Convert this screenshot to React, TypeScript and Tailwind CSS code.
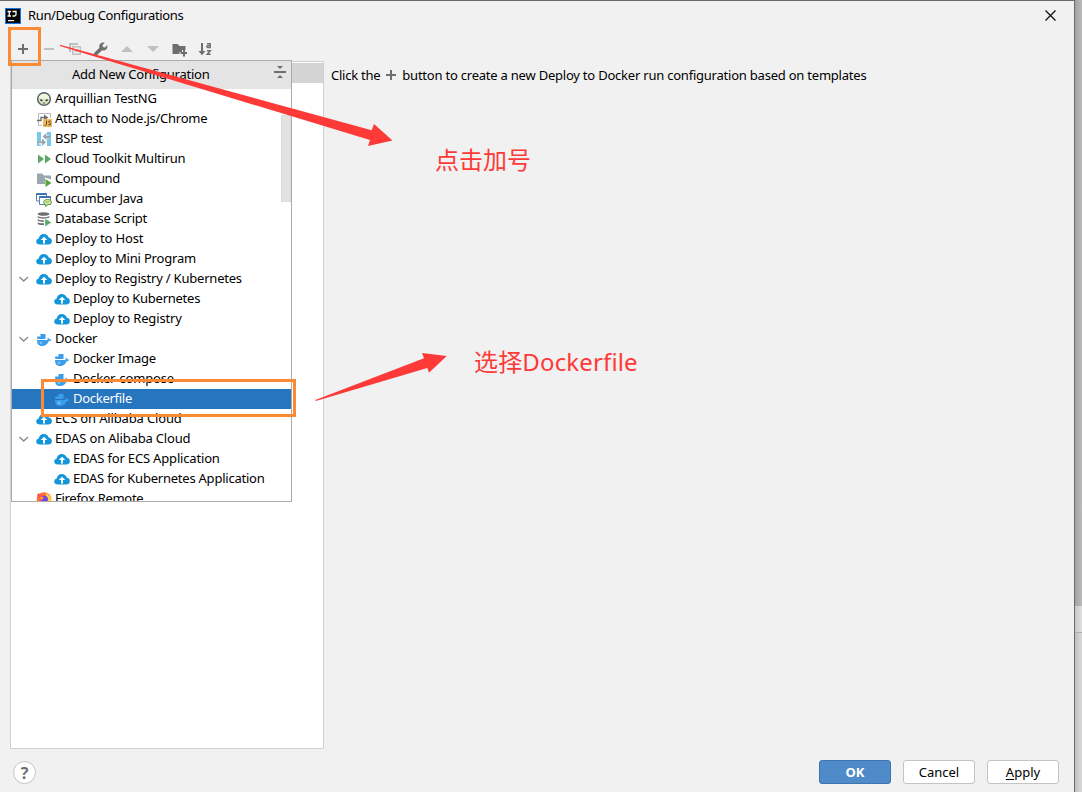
import type { ReactNode } from "react";

type IconProps = { className?: string };

function Svg({ children, className = "" }: { children: ReactNode; className?: string }) {
  return (
    <svg width="16" height="16" viewBox="0 0 16 16" className={`block shrink-0 ${className}`}>
      {children}
    </svg>
  );
}

const PlusIcon = ({ className }: IconProps) => (
  <Svg className={className}>
    <path d="M7 3h2v4h4v2H9v4H7V9H3V7h4z" fill="#6e6e6e" />
  </Svg>
);

const MinusIcon = () => (
  <Svg>
    <path d="M3 7h10v2H3z" fill="#c0c0c0" />
  </Svg>
);

const CopyIcon = () => (
  <Svg>
    <path d="M2 2h9v2H4v7H2z" fill="#c0c0c0" />
    <path d="M5 5h9v9H5zM6.5 6.5v6h6v-6z" fillRule="evenodd" fill="#c0c0c0" />
    <path d="M7.5 8h4v1h-4zM7.5 10h4v1h-4z" fill="#c0c0c0" />
  </Svg>
);

const WrenchIcon = () => (
  <Svg>
    <path
      d="M14.2 4.3 12 6.5 9.9 6.1 9.500 4l2.200-2.200C10.200 1.200 8.400 1.500 7.300 2.700 6.200 3.800 6 5.400 6.500 6.700L1.600 11.600c-.7.7-.7 1.800 0 2.500s1.800.7 2.500 0L9 9.300c1.400.5 3 .2 4.100-.8 1.200-1.200 1.600-2.800 1.100-4.200z"
      fill="#6e6e6e"
    />
  </Svg>
);

const UpIcon = () => (
  <Svg>
    <path d="M2 11l6-6 6 6z" fill="#c0c0c0" />
  </Svg>
);

const DownIcon = () => (
  <Svg>
    <path d="M2 5l6 6 6-6z" fill="#c0c0c0" />
  </Svg>
);

const NewFolderIcon = () => (
  <Svg>
    <path d="M1.500 3h5l2 2h6v4h-3.500v2H8.500v2h-7z" fill="#6e6e6e" />
    <path d="M12 8.500h2V11h2v2h-2v2.500h-2V13H9.500v-2H12z" fill="#6e6e6e" />
  </Svg>
);

const SortIcon = () => (
  <Svg>
    <path d="M4 2h2v8h2.500L5 14.200 1.500 10H4z" fill="#6e6e6e" />
    <path
      d="M10 2.800h3.200v3.700h-2.400c-1.300 0-1.300-1.900 0-1.900h2.400M10 9.700h3.300L10.200 13.300h3.500"
      fill="none"
      stroke="#6e6e6e"
      strokeWidth="1.400"
    />
  </Svg>
);

const AppIcon = () => (
  <Svg>
    <rect width="16" height="16" fill="#1479e8" />
    <rect x="1" y="1" width="14" height="14" fill="#050505" />
    <path
      d="M2.500 3.500h3.500M4.250 3.500v4.500M2.500 8h3.500M7.500 3.500H11v3c0 1-.6 1.500-1.600 1.500H7.500"
      fill="none"
      stroke="#fff"
      strokeWidth="1.300"
    />
    <path d="M3 12h6v1.200H3z" fill="#fff" />
  </Svg>
);

const AlienIcon = () => (
  <Svg>
    <circle cx="8" cy="8" r="6.300" fill="#dfe6bd" stroke="#54656a" strokeWidth="1.500" />
    <path d="M3 6c1.500-4 8.500-4 10 0v1.500H3z" fill="#f3f5e2" />
    <ellipse cx="5.300" cy="9.300" rx="1.400" ry=".8" transform="rotate(25 5.300 9.300)" fill="#2f3b3f" />
    <ellipse cx="10.700" cy="9.300" rx="1.400" ry=".8" transform="rotate(-25 10.700 9.300)" fill="#2f3b3f" />
    <path d="M6.800 12h2.400" stroke="#54656a" />
  </Svg>
);

const AttachIcon = () => (
  <Svg>
    <path d="M14.500 7V2.500h-12v12H6" fill="none" stroke="#b4bcc2" />
    <path d="M1 9.500h4V6.500h4" fill="none" stroke="#6e6e6e" strokeWidth="1.400" />
    <path d="M8 3.500l4.500 3L8 9.500z" fill="#6e6e6e" />
    <rect x="7" y="8" width="9" height="8" fill="#f4b95c" />
    <path
      d="M10.500 9.500v4c0 1-1.200 1.200-2 .6M14.800 10.300c-1.300-.7-2.500-.2-2.300.7.200.8 2.200.6 2.300 1.800 0 1.300-1.800 1.400-2.800.7"
      fill="none"
      stroke="#5c4a2a"
    />
  </Svg>
);

const BspIcon = () => (
  <Svg>
    <path d="M1 1h4v9.500H3v3h2V15H1zM11 1h4v14h-4v-7.500h2v-3h-2z" fill="#78c8ea" />
    <path d="M10.500 2v3H14v2h-3.500v2L6.500 5.500zM6 7.500v2.700H2v2h4V15l4-3.800z" fill="#9aa7b0" />
  </Svg>
);

const MultirunIcon = () => (
  <Svg>
    <path d="M2 3.500 8 8l-6 4.500zM9 3.500 15 8l-6 4.500z" fill="#59a869" />
  </Svg>
);

const CompoundIcon = () => (
  <Svg>
    <path d="M1 2.500h5l2 2h7v4L9 6.500V13H1z" fill="#9aa7b0" />
    <path d="M9.500 8 15.500 12l-6 4z" fill="#4fa63a" />
  </Svg>
);

const CucumberIcon = () => (
  <Svg>
    <path d="M.5 2.500h10v7.500H.5z" fill="#fff" stroke="#5081b5" />
    <path d="M.5 2.500h10V4H.5z" fill="#3c6da5" />
    <path d="M3.500 5.500h11v8h-11z" fill="#fff" stroke="#5081b5" />
    <path d="M3.500 5.500h11V7h-11z" fill="#3c6da5" />
    <path
      d="M11.500 8.500c2.300 0 4 1 4 2.600s-1.700 2.600-3.500 2.600l-2.300 2v-2.100c-1.200-.4-2-1.300-2-2.500 0-1.600 1.500-2.600 3.800-2.600z"
      fill="#d3eaa7"
      stroke="#659b35"
    />
    <path d="M9.500 10.500h4M9.500 12h3" stroke="#9dbf66" strokeWidth=".8" />
  </Svg>
);

const DatabaseIcon = () => (
  <Svg>
    <ellipse cx="7.500" cy="3" rx="5.800" ry="1.800" fill="#6e6e6e" />
    <path
      d="M1.700 5c1.500 1.700 10 1.700 11.600 0v1.500c-2 1.500-10 1.500-11.600 0zM1.700 8c1 1.200 4 1.500 6.300 1.300v1.500c-2.300.2-5.300-.2-6.300-1.300zM1.700 11c1 1.300 4 1.500 6.300 1.300V14c-3.500.2-6-.4-6.300-1.500z"
      fill="#6e6e6e"
    />
    <path d="M9 7.500 15.500 11.500 9 15.500z" fill="#59a869" stroke="#fff" strokeWidth=".3" />
  </Svg>
);

const CloudIcon = () => (
  <Svg>
    <path
      d="M4 13.500C1.700 13.500.2 12.200.2 10.500.2 9 1.200 7.800 2.700 7.500 3 4.800 5.200 3 7.800 3c2.300 0 4.200 1.300 4.900 3.400 1.900.2 3.200 1.700 3.200 3.500 0 2.200-1.600 3.600-3.700 3.600z"
      fill="#1296db"
    />
    <path d="M8 5.800 11.300 9H9v3.500H7V9H4.700z" fill="#fff" />
  </Svg>
);

const DockerIcon = () => (
  <Svg>
    <path d="M4.500 3H9.500v5h-5zM1.200 5.500h3.300V8H1.200z" fill="#3a9eed" />
    <path
      d="M1 9h10.300c.6-1 .4-1.800.2-2.500 1 .3 1.600 1.100 1.700 1.900.9-.2 1.700 0 2.300.4-.6 1.100-1.700 1.500-2.900 1.400C11.600 13.200 9.300 15 5.900 15 2.500 15 1 12.800 1 9z"
      fill="#3a9eed"
    />
    <circle cx="5" cy="11.800" r="1" fill="none" stroke="#a8d5f8" strokeWidth=".7" />
  </Svg>
);

const FirefoxIcon = () => (
  <Svg>
    <circle cx="8" cy="8.500" r="7.300" fill="#ff7139" />
    <path d="M10 1c.5 2.500 5.300 3.500 5.300 8 0 3-2 5.500-5 6.500z" fill="#ffd43b" />
    <path d="M1 4.500 2.500 2l2 2 3 .5L5 9z" fill="#ff4f4f" />
    <circle cx="8.300" cy="8.300" r="3.600" fill="#7542e5" />
    <path d="M3.500 6.500c2-1.500 3.500 0 4.500 0-.5 1.500-2 1.500-2.500 3z" fill="#ff9640" />
  </Svg>
);

const CollapseIcon = () => (
  <Svg>
    <path d="M2 7h12v2H2zM5 2h6L8 5zM5 14h6l-3-3z" fill="#6e6e6e" />
  </Svg>
);

const Chevron = () => (
  <svg width="10" height="8" viewBox="0 0 10 8" className="-mt-px block">
    <path d="M.5 2l4.200 4L9 2" fill="none" stroke="#8a8a8a" strokeWidth="1.300" />
  </svg>
);

type Row = {
  label: string;
  icon: () => ReactNode;
  tracking: string;
  child?: boolean;
  open?: boolean;
  selected?: boolean;
};

const rows: Row[] = [
  { label: "Arquillian TestNG", icon: AlienIcon, tracking: "tracking-[-0.22px]" },
  { label: "Attach to Node.js/Chrome", icon: AttachIcon, tracking: "tracking-[-0.25px]" },
  { label: "BSP test", icon: BspIcon, tracking: "tracking-[-0.28px]" },
  { label: "Cloud Toolkit Multirun", icon: MultirunIcon, tracking: "tracking-[-0.22px]" },
  { label: "Compound", icon: CompoundIcon, tracking: "tracking-[-0.42px]" },
  { label: "Cucumber Java", icon: CucumberIcon, tracking: "tracking-[-0.26px]" },
  { label: "Database Script", icon: DatabaseIcon, tracking: "tracking-[-0.25px]" },
  { label: "Deploy to Host", icon: CloudIcon, tracking: "tracking-[-0.13px]" },
  { label: "Deploy to Mini Program", icon: CloudIcon, tracking: "tracking-[-0.18px]" },
  { label: "Deploy to Registry / Kubernetes", icon: CloudIcon, tracking: "tracking-[-0.21px]", open: true },
  { label: "Deploy to Kubernetes", icon: CloudIcon, tracking: "tracking-[-0.25px]", child: true },
  { label: "Deploy to Registry", icon: CloudIcon, tracking: "tracking-[-0.15px]", child: true },
  { label: "Docker", icon: DockerIcon, tracking: "tracking-[-0.16px]", open: true },
  { label: "Docker Image", icon: DockerIcon, tracking: "tracking-[-0.25px]", child: true },
  { label: "Docker-compose", icon: DockerIcon, tracking: "tracking-[-0.15px]", child: true },
  { label: "Dockerfile", icon: DockerIcon, tracking: "tracking-[-0.28px]", child: true, selected: true },
  { label: "ECS on Alibaba Cloud", icon: CloudIcon, tracking: "tracking-[-0.15px]" },
  { label: "EDAS on Alibaba Cloud", icon: CloudIcon, tracking: "tracking-[-0.17px]", open: true },
  { label: "EDAS for ECS Application", icon: CloudIcon, tracking: "tracking-[-0.17px]", child: true },
  { label: "EDAS for Kubernetes Application", icon: CloudIcon, tracking: "tracking-[-0.23px]", child: true },
  { label: "Firefox Remote", icon: FirefoxIcon, tracking: "tracking-[-0.28px]" },
];

function ConfigRow({ label, icon: Icon, child, open, selected, tracking }: Row) {
  return (
    <div className={`flex h-5 shrink-0 items-center ${selected ? "bg-[#2675bf] text-white" : ""}`}>
      <div className={`flex shrink-0 pl-[7px] ${child ? "w-[42px]" : "w-6"}`}>{open && <Chevron />}</div>
      <Icon />
      <span className={`-mt-[2px] ml-[3px] whitespace-nowrap ${tracking}`}>{label}</span>
    </div>
  );
}

function AddPopup() {
  return (
    <div className="absolute -top-[2px] left-0 flex h-[442px] w-[281px] flex-col overflow-hidden border border-[#ababab] bg-white">
      <div className="flex h-7 shrink-0 items-center bg-[#e4e4e4] pr-[3px]">
        <span className="-mt-[2px] flex-1 pl-[60px] tracking-[-0.24px] whitespace-nowrap">Add New Configuration</span>
        <div className="-mt-[7px]">
          <CollapseIcon />
        </div>
      </div>
      <div className="flex flex-col">
        {rows.map((r) => (
          <ConfigRow key={r.label} {...r} />
        ))}
      </div>
      <div className="absolute top-[54px] right-0 h-[87px] w-[10px] border border-[#dadada] bg-[#e2e2e2]" />
    </div>
  );
}

function Annotations() {
  return (
    <>
      <svg width="1082" height="792" className="pointer-events-none absolute top-0 left-0">
        <path d="M60 44.800 371.700 130.300 374 124 392.500 140.500 368 146 370 140 60 46z" fill="#fd3a38" />
        <path d="M315.300 400 424 358.300 422 353 446.700 356 429 372.700 427.300 368 315.800 401z" fill="#fd3a38" />
        <rect x="9.500" y="28.500" width="30" height="36" fill="none" stroke="#fb8a35" strokeWidth="3" />
        <rect x="42.500" y="380.500" width="252" height="35" fill="none" stroke="#fb8a35" strokeWidth="3" />
      </svg>
      <div className="absolute top-[142px] left-[435px] text-[24px] leading-9 whitespace-nowrap text-[#fd3a38]">点击加号</div>
      <div className="absolute top-[344px] left-[474px] text-[24px] leading-9 tracking-[0.15px] whitespace-nowrap text-[#fd3a38]">
        选择Dockerfile
      </div>
    </>
  );
}

export default function App() {
  return (
    <div className="relative flex h-[792px] w-[1082px] overflow-hidden bg-[#f1f1f1] font-['Noto_Sans','Noto_Sans_CJK_SC',sans-serif] text-[13px] leading-5 text-black">
      <div className="flex w-[1075px] shrink-0 flex-col border-t border-r border-[#6b6b6b]">
        <div className="flex h-[29px] shrink-0 items-center pl-[5px]">
          <AppIcon />
          <span className="-mt-[2px] ml-[7px] flex-1 tracking-[-0.35px]">Run/Debug Configurations</span>
          <svg width="11" height="11" viewBox="0 0 11 11" className="mr-[18px] block">
            <path d="M.5.5l10 10M10.500.5l-10 10" stroke="#111" strokeWidth="1.300" />
          </svg>
        </div>
        <div className="flex h-[31px] shrink-0 items-center gap-[10px] pt-[7px] pl-[15px]">
          <PlusIcon />
          <MinusIcon />
          <CopyIcon />
          <WrenchIcon />
          <UpIcon />
          <DownIcon />
          <NewFolderIcon />
          <SortIcon />
        </div>
        <div className="flex h-[688px] shrink-0">
          <div className="relative ml-[10px] w-[314px] shrink-0 border border-[#d0d0d0] bg-white pt-px">
            <div className="h-5 bg-[#d4d4d4]" />
            <AddPopup />
          </div>
          <div className="flex h-7 items-center pl-[7px] whitespace-nowrap">
            <span className="tracking-[-0.25px]">Click the</span>
            <PlusIcon className="mx-[3px]" />
            <span className="tracking-[-0.22px]">
              button to create a new Deploy to Docker run configuration based on templates
            </span>
          </div>
        </div>
        <div className="flex flex-1 items-start gap-3 pt-[11px] pr-[15px] pl-[13px]">
          <div className="mt-px mr-auto flex size-[23px] items-center justify-center rounded-full border border-[#c4c4c4] bg-white text-[16px] font-bold text-[#6e6e6e]">
            ?
          </div>
          <button className="h-6 w-[72px] rounded-[3px] border border-[#3d75b3] bg-[#4f8ac9] font-bold text-white">OK</button>
          <button className="h-6 w-[72px] rounded-[3px] border border-[#c4c4c4] bg-white">Cancel</button>
          <button className="h-6 w-[72px] rounded-[3px] border border-[#c4c4c4] bg-white">
            <span className="underline underline-offset-2">A</span>pply
          </button>
        </div>
      </div>
      <div className="flex flex-1 flex-col">
        <div className="h-[606px] bg-linear-to-r from-[#a2a2a2] to-[#bcbcbc]" />
        <div className="h-[27px] border-b border-[#b0b0b0] bg-linear-to-r from-[#c8c8c8] to-[#e0e0e0]" />
        <div className="flex-1 bg-linear-to-r from-[#c0c0c0] to-[#dadada]" />
      </div>
      <Annotations />
    </div>
  );
}
